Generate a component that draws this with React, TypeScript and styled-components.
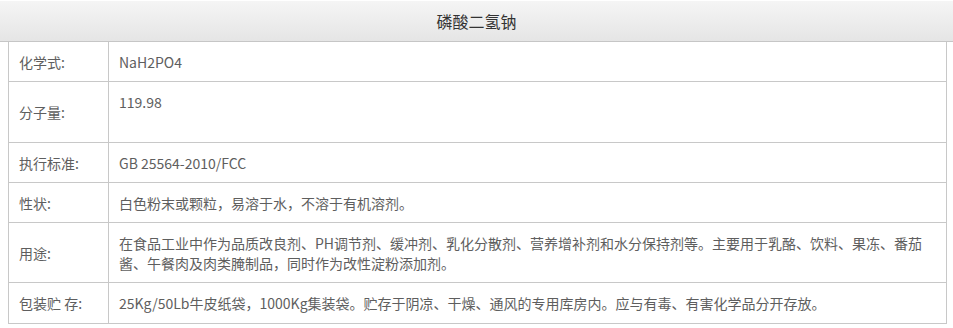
import React from 'react';
import styled, { createGlobalStyle } from 'styled-components';

const GlobalStyle = createGlobalStyle`
  html, body {
    margin: 0;
    padding: 0;
    background: #fff;
  }
  body {
    padding-top: 1px;
    font-family: "Noto Sans CJK SC", "Noto Sans", sans-serif;
  }
`;

const Header = styled.div`
  height: 40px;
  line-height: 40px;
  text-align: center;
  font-size: 16px;
  color: #333;
  background: linear-gradient(to bottom, #f5f5f5, #e5e5e5);
  border-bottom: 1px solid #c6c6c6;
`;

const Table = styled.table`
  border-collapse: collapse;
  margin: 0 6px 0 8px;
  width: calc(100% - 14px);
`;

const Row = styled.tr`
  &:first-child td {
    border-top: none;
  }
`;

const Label = styled.td`
  width: 79px;
  padding: 10px 10px 9.25px;
  font-size: 14px;
  line-height: 20px;
  color: #5e5e5e;
  border: 1px solid #c8c8c8;
  vertical-align: middle;
  white-space: nowrap;
`;

const Value = styled.td<{ $top?: boolean }>`
  padding: 10px 10px 9.25px;
  font-size: 14px;
  line-height: 20px;
  color: #5e5e5e;
  border: 1px solid #c8c8c8;
  vertical-align: ${(p) => (p.$top ? 'top' : 'middle')};
`;

const rows: { label: string; value: React.ReactNode; top?: boolean }[] = [
  { label: '化学式:', value: 'NaH2PO4' },
  {
    label: '分子量:',
    value: (
      <>
        119.98
        <br />
        &nbsp;
      </>
    ),
    top: true,
  },
  { label: '执行标准:', value: 'GB 25564-2010/FCC' },
  { label: '性状:', value: '白色粉末或颗粒，易溶于水，不溶于有机溶剂。' },
  {
    label: '用途:',
    value:
      '在食品工业中作为品质改良剂、PH调节剂、缓冲剂、乳化分散剂、营养增补剂和水分保持剂等。主要用于乳酪、饮料、果冻、番茄酱、午餐肉及肉类腌制品，同时作为改性淀粉添加剂。',
  },
  {
    label: '包装贮 存:',
    value: '25Kg/50Lb牛皮纸袋，1000Kg集装袋。贮存于阴凉、干燥、通风的专用库房内。应与有毒、有害化学品分开存放。',
  },
];

export default function App() {
  return (
    <>
      <GlobalStyle />
      <Header>磷酸二氢钠</Header>
      <Table>
        <tbody>
          {rows.map((r) => (
            <Row key={r.label}>
              <Label>{r.label}</Label>
              <Value $top={r.top}>{r.value}</Value>
            </Row>
          ))}
        </tbody>
      </Table>
    </>
  );
}
